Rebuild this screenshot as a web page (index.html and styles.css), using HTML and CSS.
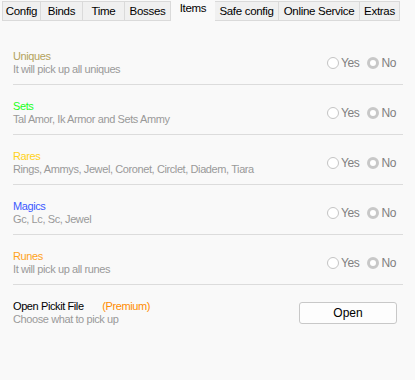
FILE: index.html
```html
<!DOCTYPE html>
<html lang="en">
<head>
	<meta charset="UTF-8">
	<title>Items</title>
	<link rel="stylesheet" href="styles.css">
</head>
<body>
	<ul class="tabs">
		<li class="tab w39">Config</li>
		<li class="tab w42">Binds</li>
		<li class="tab w42">Time</li>
		<li class="tab w46">Bosses</li>
		<li class="tab w44 active">Items</li>
		<li class="tab w64">Safe config</li>
		<li class="tab w81">Online Service</li>
		<li class="tab w40">Extras</li>
	</ul>
	<div class="panel">
		<div class="row">
			<div class="info">
				<div class="name uniques">Uniques</div>
				<div class="desc">It will pick up all uniques</div>
			</div>
			<div class="choice">
				<span class="radio"></span><span class="opt">Yes</span>
				<span class="radio on"></span><span class="opt">No</span>
			</div>
		</div>
		<div class="row">
			<div class="info">
				<div class="name sets">Sets</div>
				<div class="desc">Tal Amor, Ik Armor and Sets Ammy</div>
			</div>
			<div class="choice">
				<span class="radio"></span><span class="opt">Yes</span>
				<span class="radio on"></span><span class="opt">No</span>
			</div>
		</div>
		<div class="row">
			<div class="info">
				<div class="name rares">Rares</div>
				<div class="desc">Rings, Ammys, Jewel, Coronet, Circlet, Diadem, Tiara</div>
			</div>
			<div class="choice">
				<span class="radio"></span><span class="opt">Yes</span>
				<span class="radio on"></span><span class="opt">No</span>
			</div>
		</div>
		<div class="row">
			<div class="info">
				<div class="name magics">Magics</div>
				<div class="desc">Gc, Lc, Sc, Jewel</div>
			</div>
			<div class="choice">
				<span class="radio"></span><span class="opt">Yes</span>
				<span class="radio on"></span><span class="opt">No</span>
			</div>
		</div>
		<div class="row">
			<div class="info">
				<div class="name runes">Runes</div>
				<div class="desc">It will pick up all runes</div>
			</div>
			<div class="choice">
				<span class="radio"></span><span class="opt">Yes</span>
				<span class="radio on"></span><span class="opt">No</span>
			</div>
		</div>
		<div class="row last">
			<div class="info">
				<div class="name">Open Pickit File <span class="premium">(Premium)</span></div>
				<div class="desc">Choose what to pick up</div>
			</div>
			<button class="open">Open</button>
		</div>
	</div>
</body>
</html>
```
FILE: styles.css
```css
html,body{
	margin: 0;
	height: 100%;
}
body{
	background: #f9f9f9;
	font-family: "Liberation Sans", Arial, sans-serif;
	font-size: 11px;
	color: #000;
}
.tabs{
	list-style: none;
	margin: 0;
	padding: 0 0 0 2px;
	display: flex;
	height: 20px;
}
.tab{
	box-sizing: border-box;
	height: 20px;
	margin-top: 1px;
	border: 1px solid #dadada;
	border-left: none;
	background: #f0f0f0;
	font-size: 11.5px;
	letter-spacing: -0.3px;
	line-height: 18px;
	text-align: center;
}
.tab:first-child{
	border-left: 1px solid #dadada;
}
.tab.active{
	background: #f9f9f9;
	border: none;
	margin-top: 0;
	line-height: 17px;
}
.w39{ width: 39px; }
.w40{ width: 40px; }
.w42{ width: 42px; }
.w44{ width: 44px; }
.w46{ width: 46px; }
.w64{ width: 64px; }
.w81{ width: 81px; }
.panel{
	padding: 15px 12px 0 13px;
}
.row{
	display: flex;
	align-items: center;
	justify-content: space-between;
	padding: 15px 0 8px;
	border-bottom: 1px solid #dcdcdc;
}
.row.last{
	border-bottom: none;
}
.name,.desc{
	line-height: 13px;
	letter-spacing: -0.4px;
}
.desc{
	color: #999;
}
.uniques{ color: #b4a35c; }
.sets{ color: #1aff1a; }
.rares{ color: #ffd21a; }
.magics{ color: #3c5aff; }
.runes{ color: #ffa21a; }
.premium{
	color: #ff8c00;
	margin-left: 16px;
}
.choice{
	display: flex;
	align-items: center;
	margin-right: 7px;
	font-size: 12px;
	letter-spacing: -0.4px;
	color: #808080;
}
.radio{
	box-sizing: border-box;
	width: 12px;
	height: 12px;
	border: 1px solid #c4c4c4;
	border-radius: 50%;
	background: #fff;
	margin-right: 2px;
}
.radio.on{
	border: 3px solid #c8c8c8;
	background: #fff;
	margin-left: 8px;
}
.open{
	width: 98px;
	height: 22px;
	margin-right: 6px;
	background: #fdfdfd;
	border: 1px solid #c8c8c8;
	border-radius: 3px;
	font-family: "Liberation Sans", Arial, sans-serif;
	font-size: 12px;
	color: #000;
}
```
